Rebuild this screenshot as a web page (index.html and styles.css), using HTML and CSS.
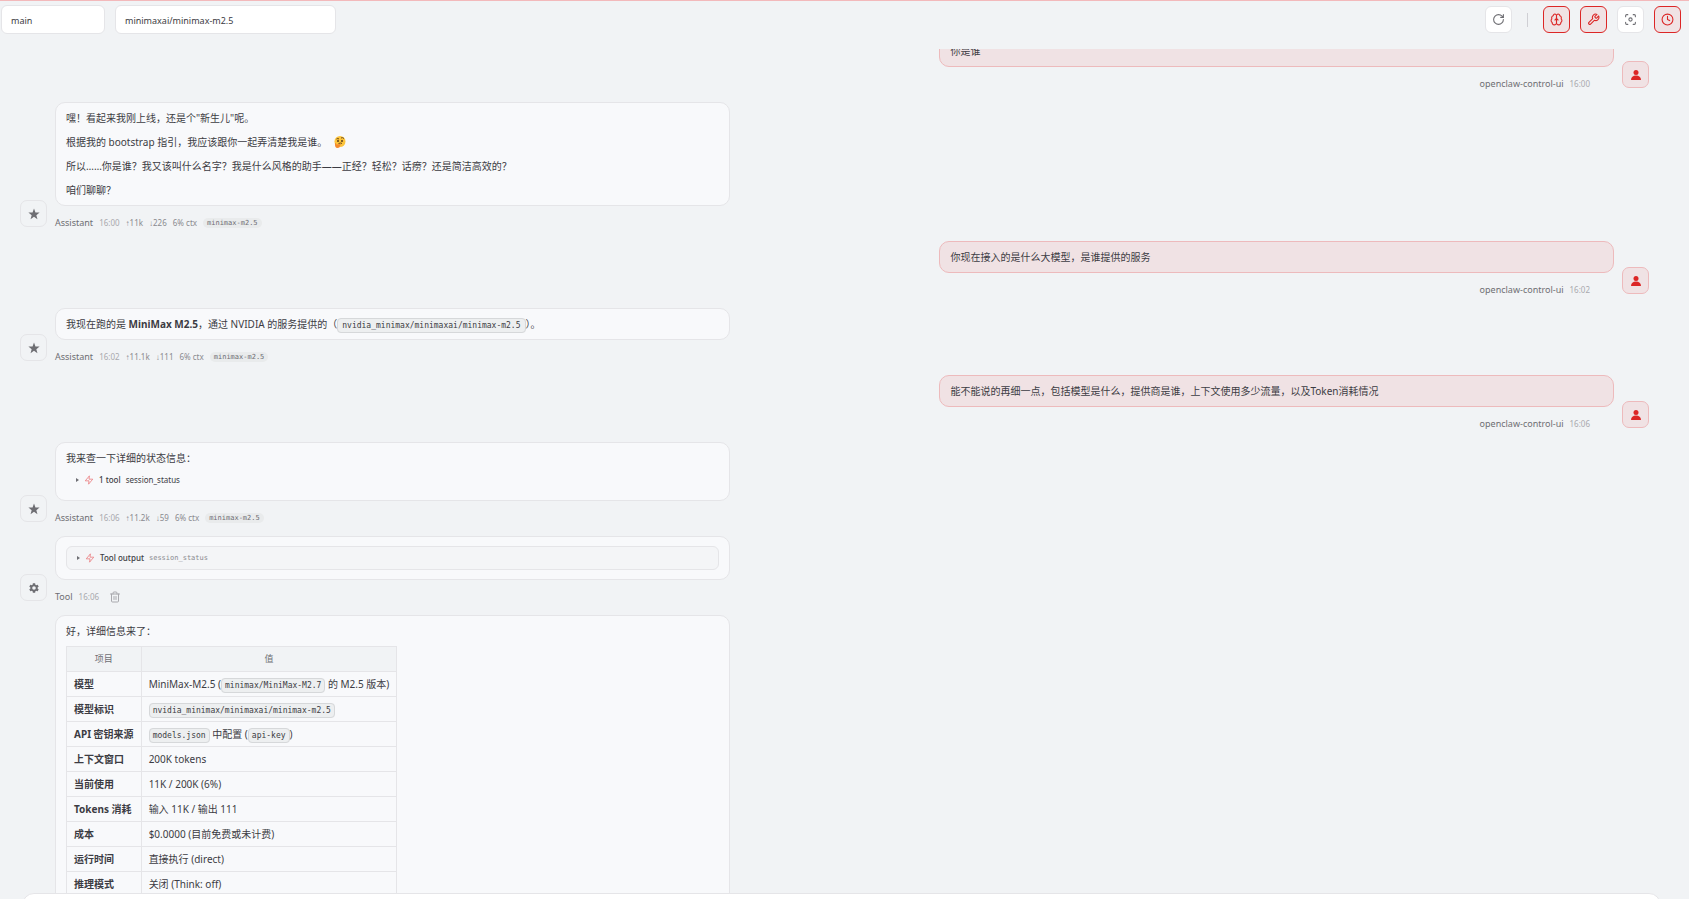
FILE: index.html
```html
<!DOCTYPE html>
<html lang="zh-CN">
<head>
<meta charset="utf-8">
<title>openclaw-control-ui</title>
<link rel="stylesheet" href="styles.css">
</head>
<body>
<svg class="defs" aria-hidden="true">
  <symbol id="star" viewBox="0 0 24 24"><path fill="currentColor" d="M12 1l2.900 7.800 8.300.3-6.500 5.200 2.200 8L12 17.700l-6.900 4.600 2.200-8L.8 9.100l8.300-.3z"/></symbol>
  <symbol id="user" viewBox="0 0 24 24"><circle cx="12" cy="7" r="5" fill="currentColor"/><path fill="currentColor" d="M2 22c0-6 4-9 10-9s10 3 10 9z"/></symbol>
  <symbol id="zap" viewBox="0 0 24 24"><path d="M13 2 3 14h9l-1 8 10-12h-9z"/></symbol>
  <symbol id="gear" viewBox="0 0 24 24"><path fill="currentColor" d="M19.140 12.940c.04-.3.06-.61.06-.94 0-.32-.02-.64-.07-.94l2.030-1.580a.49.49 0 0 0 .12-.61l-1.920-3.320a.488.488 0 0 0-.59-.22l-2.390.96c-.5-.38-1.030-.7-1.620-.94l-.36-2.540a.484.484 0 0 0-.48-.41h-3.840c-.24 0-.43.17-.47.41l-.36 2.540c-.59.24-1.130.57-1.620.94l-2.390-.96c-.22-.08-.47 0-.59.22L2.740 8.870c-.12.21-.08.47.12.61l2.030 1.580c-.05.3-.09.63-.09.94s.02.64.07.94l-2.030 1.580a.49.49 0 0 0-.12.61l1.920 3.320c.12.22.37.29.59.22l2.390-.96c.5.38 1.030.7 1.620.94l.36 2.540c.05.24.24.41.48.41h3.840c.24 0 .44-.17.47-.41l.36-2.540c.59-.24 1.130-.56 1.620-.94l2.390.96c.22.08.47 0 .59-.22l1.920-3.320c.12-.22.07-.47-.12-.61zM12 15.600A3.600 3.600 0 1 1 12 8.400a3.600 3.600 0 0 1 0 7.200z"/></symbol>
</svg>
<header class="topbar">
  <select class="picker picker-session" aria-label="Session"><option>main</option></select>
  <select class="picker picker-model" aria-label="Model"><option>minimaxai/minimax-m2.5</option></select>
  <div class="actions">
    <button class="icon-btn" type="button" aria-label="Refresh"><svg class="icon" viewBox="0 0 24 24"><path d="M21 12a9 9 0 1 1-9-9c2.520 0 4.930 1 6.740 2.740L21 8"/><path d="M21 3v5h-5"/></svg></button>
    <span class="divider"></span>
    <button class="icon-btn active" type="button" aria-label="Thinking"><svg class="icon" viewBox="0 0 24 24"><path d="M12 5a3 3 0 1 0-5.997.125 4 4 0 0 0-2.526 5.770 4 4 0 0 0 .556 6.588A4 4 0 1 0 12 18Z"/><path d="M12 5a3 3 0 1 1 5.997.125 4 4 0 0 1 2.526 5.770 4 4 0 0 1-.556 6.588A4 4 0 1 1 12 18Z"/><path d="M15 13a4.500 4.500 0 0 1-3-4 4.500 4.500 0 0 1-3 4"/></svg></button>
    <button class="icon-btn active" type="button" aria-label="Tools"><svg class="icon" viewBox="0 0 24 24"><path d="M14.700 6.300a1 1 0 0 0 0 1.400l1.600 1.600a1 1 0 0 0 1.400 0l3.770-3.770a6 6 0 0 1-7.940 7.940l-6.910 6.910a2.120 2.120 0 0 1-3-3l6.910-6.910a6 6 0 0 1 7.940-7.940l-3.760 3.760z"/></svg></button>
    <button class="icon-btn" type="button" aria-label="Focus"><svg class="icon" viewBox="0 0 24 24"><circle cx="12" cy="12" r="3"/><path d="M3 7V5a2 2 0 0 1 2-2h2M17 3h2a2 2 0 0 1 2 2v2M21 17v2a2 2 0 0 1-2 2h-2M7 21H5a2 2 0 0 1-2-2v-2"/></svg></button>
    <button class="icon-btn active" type="button" aria-label="History"><svg class="icon" viewBox="0 0 24 24"><circle cx="12" cy="12" r="10"/><path d="M12 6v6l4 2"/></svg></button>
  </div>
</header>
<main class="viewport">
  <div class="thread">
    <section class="group user">
      <div class="avatar"><svg><use href="#user"/></svg></div>
      <div class="body">
        <div class="bubble"><p>你是谁</p></div>
        <div class="meta"><span class="name">openclaw-control-ui</span><time>16:00</time></div>
      </div>
    </section>
    <section class="group">
      <div class="avatar"><svg><use href="#star"/></svg></div>
      <div class="body">
        <div class="bubble">
          <p>嘿！看起来我刚上线，还是个"新生儿"呢。</p>
          <p>根据我的 bootstrap 指引，我应该跟你一起弄清楚我是谁。 <svg class="emoji" viewBox="0 0 24 24" role="img" aria-label="thinking face"><circle cx="12" cy="11" r="11" fill="#fcc43c"/><path d="M5 6q3-2 5 0M14 4q3-2 6 1M9 15q4-2 7 0" fill="none" stroke="#6b4a1b" stroke-width="2"/><circle cx="8" cy="10" r="2" fill="#5b3d18"/><circle cx="16" cy="10" r="2" fill="#5b3d18"/><path d="M2 14q2-1 3 3l8-1q2 1-1 3 0 5-5 5-6 0-5-10z" fill="#f58a2c"/></svg></p>
          <p>所以……你是谁？我又该叫什么名字？我是什么风格的助手——正经？轻松？话痨？还是简洁高效的？</p>
          <p>咱们聊聊？</p>
        </div>
        <div class="meta"><span class="name">Assistant</span><time>16:00</time><span><i>↑</i>11k</span><span><i>↓</i>226</span><span>6% ctx</span><span class="model">minimax-m2.5</span></div>
      </div>
    </section>
    <section class="group user">
      <div class="avatar"><svg><use href="#user"/></svg></div>
      <div class="body">
        <div class="bubble"><p>你现在接入的是什么大模型，是谁提供的服务</p></div>
        <div class="meta"><span class="name">openclaw-control-ui</span><time>16:02</time></div>
      </div>
    </section>
    <section class="group">
      <div class="avatar"><svg><use href="#star"/></svg></div>
      <div class="body">
        <div class="bubble"><p>我现在跑的是 <strong>MiniMax M2.5</strong>，通过 NVIDIA 的服务提供的（<code>nvidia_minimax/minimaxai/minimax-m2.5</code>）。</p></div>
        <div class="meta"><span class="name">Assistant</span><time>16:02</time><span><i>↑</i>11.1k</span><span><i>↓</i>111</span><span>6% ctx</span><span class="model">minimax-m2.5</span></div>
      </div>
    </section>
    <section class="group user">
      <div class="avatar"><svg><use href="#user"/></svg></div>
      <div class="body">
        <div class="bubble"><p>能不能说的再细一点，包括模型是什么，提供商是谁，上下文使用多少流量，以及Token消耗情况</p></div>
        <div class="meta"><span class="name">openclaw-control-ui</span><time>16:06</time></div>
      </div>
    </section>
    <section class="group">
      <div class="avatar"><svg><use href="#star"/></svg></div>
      <div class="body">
        <div class="bubble">
          <p>我来查一下详细的状态信息：</p>
          <div class="tool tool-call"><span class="caret"></span><svg class="zap"><use href="#zap"/></svg><b>1 tool</b><span>session_status</span></div>
        </div>
        <div class="meta"><span class="name">Assistant</span><time>16:06</time><span><i>↑</i>11.2k</span><span><i>↓</i>59</span><span>6% ctx</span><span class="model">minimax-m2.5</span></div>
      </div>
    </section>
    <section class="group">
      <div class="avatar"><svg><use href="#gear"/></svg></div>
      <div class="body">
        <div class="bubble">
          <div class="tool tool-card"><span class="caret"></span><svg class="zap"><use href="#zap"/></svg><b>Tool output</b><span class="mono">session_status</span></div>
        </div>
        <div class="meta"><span class="name">Tool</span><time>16:06</time><button class="trash" type="button" aria-label="Delete"><svg class="icon" viewBox="0 0 24 24"><path d="M3 6h18M19 6v14a2 2 0 0 1-2 2H7a2 2 0 0 1-2-2V6M8 6V4a2 2 0 0 1 2-2h4a2 2 0 0 1 2 2v2M10 11v6M14 11v6"/></svg></button></div>
      </div>
    </section>
    <section class="group latest">
      <div class="avatar"><svg><use href="#star"/></svg></div>
      <div class="body">
        <div class="bubble">
          <p>好，详细信息来了：</p>
          <table>
            <thead><tr><th>项目</th><th>值</th></tr></thead>
            <tbody>
              <tr><td><strong>模型</strong></td><td>MiniMax-M2.5 (<code>minimax/MiniMax-M2.7</code> 的 M2.5 版本)</td></tr>
              <tr><td><strong>模型标识</strong></td><td><code>nvidia_minimax/minimaxai/minimax-m2.5</code></td></tr>
              <tr><td><strong>API 密钥来源</strong></td><td><code>models.json</code> 中配置 (<code>api-key</code>)</td></tr>
              <tr><td><strong>上下文窗口</strong></td><td>200K tokens</td></tr>
              <tr><td><strong>当前使用</strong></td><td>11K / 200K (6%)</td></tr>
              <tr><td><strong>Tokens 消耗</strong></td><td>输入 11K / 输出 111</td></tr>
              <tr><td><strong>成本</strong></td><td>$0.0000 (目前免费或未计费)</td></tr>
              <tr><td><strong>运行时间</strong></td><td>直接执行 (direct)</td></tr>
              <tr><td><strong>推理模式</strong></td><td>关闭 (Think: off)</td></tr>
            </tbody>
          </table>
        </div>
      </div>
    </section>
  </div>
</main>
<footer class="dock"><div class="composer"></div></footer>
</body>
</html>
```

FILE: styles.css
```css
:root {
  --bg: #f1f3f5;
  --line: #e5e5e8;
  --text: #3c3c43;
  --muted: #6e6e73;
  --faint: #a9a9ae;
  --red: #dc2626;
  --tint: #f0e2e4;
  --tint-line: #edbabc;
  --sans: "Noto Sans", "Noto Sans CJK SC", sans-serif;
  --mono: "DejaVu Sans Mono", "Liberation Mono", monospace;
}

* { box-sizing: border-box; }

body {
  margin: 0;
  height: 100vh;
  overflow: hidden;
  display: flex;
  flex-direction: column;
  background: var(--bg);
  border-top: 1px solid #f3b9bb;
  color: var(--text);
  font: 10px/16px var(--sans);
}

button { padding: 0; font: inherit; }
p { margin: 0; }
.defs { position: absolute; width: 0; height: 0; }

.icon {
  width: 13px;
  height: 13px;
  fill: none;
  stroke: currentColor;
  stroke-width: 2;
  stroke-linecap: round;
  stroke-linejoin: round;
}

.topbar {
  flex: none;
  display: flex;
  align-items: flex-start;
  gap: 10px;
  height: 48px;
  padding: 4px 8px 0 1px;
}

.picker {
  appearance: none;
  height: 29px;
  padding: 2px 9px 0;
  border: 1px solid var(--line);
  border-radius: 6px;
  background: #fff;
  color: var(--text);
  font: 9px/16px var(--sans);
}
.picker-session { width: 104px; }
.picker-model { width: 221px; }

.actions {
  margin-left: auto;
  padding-top: 1px;
  display: flex;
  align-items: center;
  gap: 10px;
}

.icon-btn {
  display: grid;
  place-items: center;
  width: 27px;
  height: 27px;
  border: 1px solid var(--line);
  border-radius: 6px;
  background: #fff;
  color: var(--muted);
}
.icon-btn.active {
  border-color: var(--red);
  background: var(--tint);
  color: var(--red);
}
.divider { width: 1px; height: 14px; margin: 0 5px; background: #cfcfd4; }

.viewport { flex: 1; min-height: 0; overflow: hidden; }

.thread {
  display: flex;
  flex-direction: column;
  gap: 14px;
  margin-top: -14px;
  padding: 0 40px 0 20px;
}

.group { display: flex; align-items: flex-end; gap: 8px; }
.group.user { flex-direction: row-reverse; }
.group.latest { padding-bottom: 40px; }
.latest .avatar { margin-bottom: -40px; }
.body { width: calc(40vw - 1px); }

.avatar {
  display: grid;
  place-items: center;
  width: 27px;
  height: 27px;
  border: 1px solid var(--line);
  border-radius: 7px;
  color: var(--muted);
}
.avatar svg { width: 12px; height: 12px; }
.user .avatar {
  border-color: var(--tint-line);
  background: var(--tint);
  color: var(--red);
}

.bubble {
  display: flow-root;
  padding: 7px 10px;
  border: 1px solid var(--line);
  border-radius: 10px;
  background: #f8f9fb;
}
.bubble p + p { margin-top: 8px; }
.user .bubble { border-color: var(--tint-line); background: var(--tint); }

.emoji { width: 12px; height: 12px; margin-left: 4px; vertical-align: -2px; }

code {
  padding: 2px 3px;
  border: 1px solid #d6d8da;
  border-radius: 4px;
  background: #edeff0;
  font: 8px/10px var(--mono);
}
p code { padding: 2px 4px; }

.meta {
  display: flex;
  align-items: center;
  gap: 6px;
  height: 21px;
  padding-top: 13px;
  color: #8a8a8f;
  font-size: 8px;
  line-height: 12px;
}
.meta i { font: 8px/12px "Liberation Sans", sans-serif; }
.user .meta { justify-content: flex-end; padding-right: 24px; }
.name { color: var(--muted); font-size: 9px; }
.meta time { color: var(--faint); }
.model {
  padding: 0 4px;
  border-radius: 5px;
  background: #e9ebec;
  color: var(--muted);
  font: 7px/10px var(--mono);
}
.trash {
  height: 16px;
  margin-left: 4px;
  border: 0;
  background: none;
  color: var(--faint);
}
.trash .icon { display: block; width: 12px; height: 12px; }

.tool {
  display: flex;
  align-items: center;
  gap: 5px;
  height: 24px;
  padding: 0 10px;
  font-size: 8px;
}
.tool b { font-weight: 500; }
.tool-call { margin: 2px 0 1px; }
.tool-card {
  margin: 2px 0;
  border: 1px solid var(--line);
  border-radius: 6px;
  background: #f4f5f7;
}
.mono { color: #8a8a8f; font: 7px/12px var(--mono); }
.caret {
  border-left: 3px solid var(--muted);
  border-top: 2px solid transparent;
  border-bottom: 2px solid transparent;
}
.zap {
  width: 10px;
  height: 10px;
  fill: none;
  stroke: #ea8082;
  stroke-width: 2;
  stroke-linejoin: round;
}

table { margin-top: 7px; border-collapse: collapse; white-space: nowrap; }
th, td { padding: 4px 7px; border: 1px solid var(--line); text-align: left; }
th {
  background: #f1f3f5;
  color: var(--muted);
  font-size: 9px;
  font-weight: 400;
  text-align: center;
}

.dock { flex: none; height: 6px; overflow: hidden; padding: 0 28px 0 22px; }
.composer {
  height: 80px;
  border: 1px solid var(--line);
  border-radius: 12px;
  background: #fff;
}
```
